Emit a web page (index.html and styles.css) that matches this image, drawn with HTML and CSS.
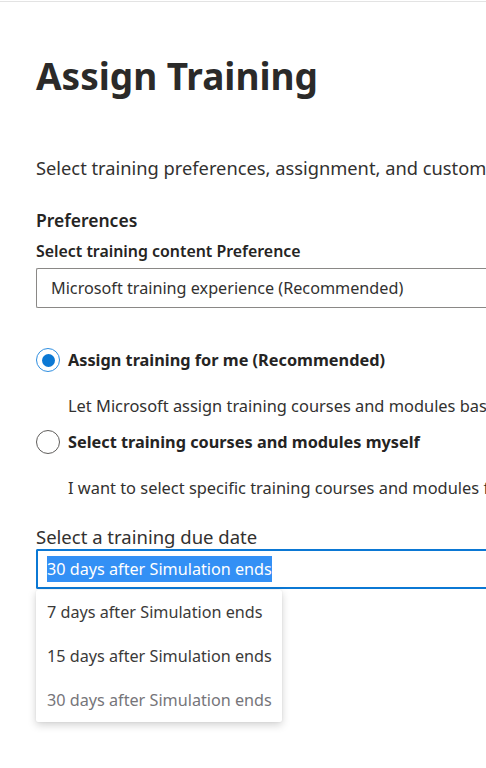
FILE: index.html
```html
<!DOCTYPE html>
<html lang="en">
<head>
<meta charset="utf-8">
<title>Assign Training</title>
<link rel="stylesheet" href="styles.css">
</head>
<body>
<div class="topbar"></div>
<main class="page">
  <h1 class="title">Assign Training</h1>
  <p class="intro">Select training preferences, assignment, and customize training due dates for your simulation.</p>

  <h2 class="section">Preferences</h2>
  <div class="field-label">Select training content Preference</div>
  <div class="dropdown">Microsoft training experience (Recommended)</div>

  <div class="radios">
    <div class="radio-row">
      <span class="radio checked"><span class="dot"></span></span>
      <span class="radio-label">Assign training for me (Recommended)</span>
    </div>
    <div class="radio-desc">Let Microsoft assign training courses and modules based on the user's previous simulation and training results.</div>
    <div class="radio-row">
      <span class="radio"></span>
      <span class="radio-label">Select training courses and modules myself</span>
    </div>
    <div class="radio-desc">I want to select specific training courses and modules from the training catalog.</div>
  </div>

  <div class="due">
    <div class="due-label">Select a training due date</div>
    <div class="combo"><span class="selected-text">30 days after Simulation ends</span></div>
    <ul class="menu">
      <li class="menu-item">7 days after Simulation ends</li>
      <li class="menu-item">15 days after Simulation ends</li>
      <li class="menu-item muted">30 days after Simulation ends</li>
    </ul>
  </div>
</main>
</body>
</html>
```

FILE: styles.css
```css
html, body {
  margin: 0;
  padding: 0;
  background: #ffffff;
}
body {
  width: 486px;
  height: 768px;
  overflow: hidden;
  font-family: "Noto Sans", "Open Sans", sans-serif;
  color: #323130;
}
.topbar {
  height: 1px;
  margin-top: 1px;
  background: #e3e3e3;
}
.page {
  padding-left: 36px;
  white-space: nowrap;
}
.title {
  margin: 50px 0 0;
  font-size: 37px;
  line-height: 48px;
  font-weight: 700;
  color: #2b2a29;
}
.intro {
  margin: 55px 0 0;
  font-size: 18.3px;
  line-height: 26px;
  color: #323130;
}
.section {
  margin: 27px 0 0;
  font-size: 17.5px;
  line-height: 24px;
  font-weight: 600;
  color: #252423;
}
.field-label {
  margin-top: 8px;
  font-size: 15.9px;
  line-height: 22px;
  font-weight: 600;
  color: #252423;
}
.dropdown {
  margin-top: 6px;
  height: 38px;
  border: 1px solid #8a8886;
  border-right: none;
  border-radius: 2px 0 0 2px;
  padding-left: 14px;
  font-size: 16.2px;
  line-height: 38px;
  color: #323130;
}
.radios {
  margin-top: 39px;
}
.radio-row {
  display: flex;
  align-items: center;
  gap: 8px;
  height: 26px;
}
.radio {
  box-sizing: border-box;
  width: 24px;
  height: 24px;
  border-radius: 50%;
  border: 1.5px solid #605e5c;
  display: flex;
  align-items: center;
  justify-content: center;
  flex: none;
}
.radio.checked {
  border-color: #2e8ee0;
}
.dot {
  width: 13px;
  height: 13px;
  border-radius: 50%;
  background: #0b78d4;
}
.radio-label {
  font-size: 16.3px;
  font-weight: 700;
  color: #252423;
}
.radio-desc {
  padding-left: 32px;
  margin: 21px 0 11px;
  font-size: 16.4px;
  line-height: 24px;
  color: #323130;
}
.radio-desc:last-child {
  margin-bottom: 7px;
}
.due {
  margin-top: 25px;
}
.due-label {
  font-size: 18.5px;
  line-height: 24px;
  color: #323130;
}
.combo {
  box-sizing: border-box;
  height: 40px;
  border: 2px solid #0b78d4;
  border-right: none;
  border-radius: 2px 0 0 2px;
  padding-left: 9px;
  font-size: 16.2px;
  line-height: 36px;
}
.selected-text {
  background: #3390f5;
  color: #ffffff;
  padding: 2px 0;
}
.menu {
  list-style: none;
  margin: 1px 0 0;
  padding: 0;
  width: 246px;
  background: #ffffff;
  box-shadow: 0 3px 8px rgba(0, 0, 0, 0.18), 0 0 2px rgba(0, 0, 0, 0.08);
  border-radius: 2px;
}
.menu-item {
  height: 44px;
  line-height: 44px;
  padding-left: 11px;
  font-size: 16.2px;
  color: #3b3a39;
}
.menu-item.muted {
  color: #76757a;
}
```
